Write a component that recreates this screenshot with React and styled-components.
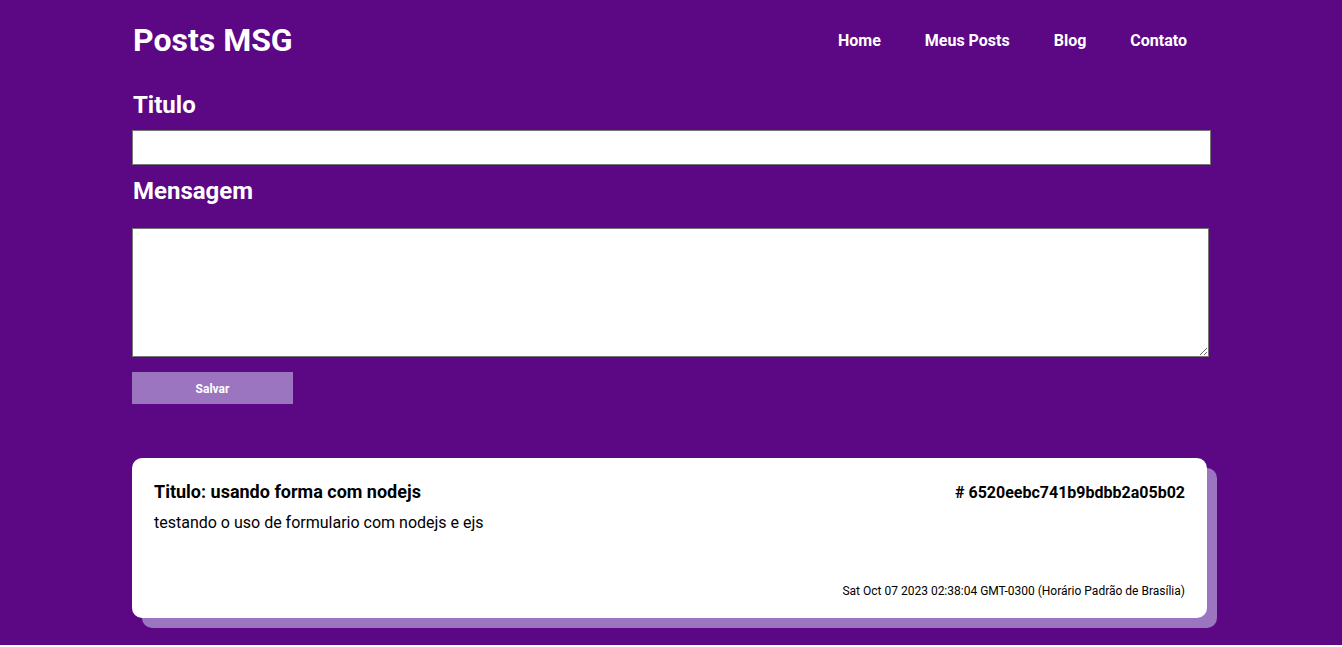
import styled, { createGlobalStyle } from "styled-components";

const GlobalStyle = createGlobalStyle`
  body {
    margin: 0;
    background: #fff;
    font-family: Roboto, "Liberation Sans", sans-serif;
  }
`;

const Page = styled.div`
  background: #5c0784;
  height: 645px;
  overflow: hidden;
`;

const Container = styled.div`
  width: 1078px;
  margin: 0 auto 0 132px;
`;

const Header = styled.header`
  display: flex;
  align-items: center;
  justify-content: space-between;
  height: 80px;
`;

const Logo = styled.h1`
  margin: 0;
  color: #fff;
  font-size: 32px;
  font-weight: 700;
  padding-left: 1px;
`;

const Nav = styled.nav`
  display: flex;
  gap: 44px;
  margin-right: 23px;
`;

const NavLink = styled.a`
  color: #fff;
  font-size: 16px;
  font-weight: 700;
  text-decoration: none;
`;

const Form = styled.form`
  display: flex;
  flex-direction: column;
`;

const Label = styled.label`
  color: #fff;
  font-size: 24px;
  font-weight: 700;
  line-height: 28px;
  margin-left: 1px;
  margin-top: ${(p) => p.$top}px;
  margin-bottom: ${(p) => p.$bottom}px;
`;

const TextInput = styled.input`
  box-sizing: border-box;
  width: 1079px;
  height: 35px;
  border: 1px solid #767676;
  margin: 0;
  background: #fff;
`;

const TextArea = styled.textarea`
  box-sizing: border-box;
  width: 1077px;
  height: 129px;
  border: 1px solid #767676;
  margin: 0;
  background: #fff;
`;

const Button = styled.button`
  width: 161px;
  height: 32px;
  margin-top: 15px;
  padding-top: 2px;
  border: none;
  background: #9c75c0;
  color: #fff;
  font-family: Roboto, "Liberation Sans", sans-serif;
  font-size: 12px;
  font-weight: 700;
`;

const Card = styled.article`
  box-sizing: border-box;
  width: 1075px;
  height: 160px;
  margin-top: 54px;
  background: #fff;
  border-radius: 10px;
  box-shadow: 10px 10px 0 #9c75c0;
  padding: 23px 22px 20px 22px;
  display: flex;
  flex-direction: column;
`;

const CardHead = styled.div`
  display: flex;
  justify-content: space-between;
  align-items: baseline;
`;

const CardTitle = styled.h2`
  margin: 0;
  font-size: 18px;
  font-weight: 700;
  color: #000;
`;

const CardId = styled.span`
  font-size: 16px;
  font-weight: 700;
  color: #000;
`;

const CardBody = styled.p`
  margin: 11px 0 0;
  font-size: 16px;
  color: #000;
`;

const CardDate = styled.span`
  margin-top: auto;
  align-self: flex-end;
  font-size: 12px;
  color: #000;
`;

export default function App() {
  return (
    <>
      <GlobalStyle />
      <Page>
        <Container>
          <Header>
            <Logo>Posts MSG</Logo>
            <Nav>
              <NavLink href="#">Home</NavLink>
              <NavLink href="#">Meus Posts</NavLink>
              <NavLink href="#">Blog</NavLink>
              <NavLink href="#">Contato</NavLink>
            </Nav>
          </Header>
          <Form onSubmit={(e) => e.preventDefault()}>
            <Label $top={11} $bottom={11}>Titulo</Label>
            <TextInput type="text" />
            <Label $top={12} $bottom={23}>Mensagem</Label>
            <TextArea />
            <Button type="submit">Salvar</Button>
          </Form>
          <Card>
            <CardHead>
              <CardTitle>Titulo: usando forma com nodejs</CardTitle>
              <CardId># 6520eebc741b9bdbb2a05b02</CardId>
            </CardHead>
            <CardBody>testando o uso de formulario com nodejs e ejs</CardBody>
            <CardDate>Sat Oct 07 2023 02:38:04 GMT-0300 (Horário Padrão de Brasília)</CardDate>
          </Card>
        </Container>
      </Page>
    </>
  );
}
